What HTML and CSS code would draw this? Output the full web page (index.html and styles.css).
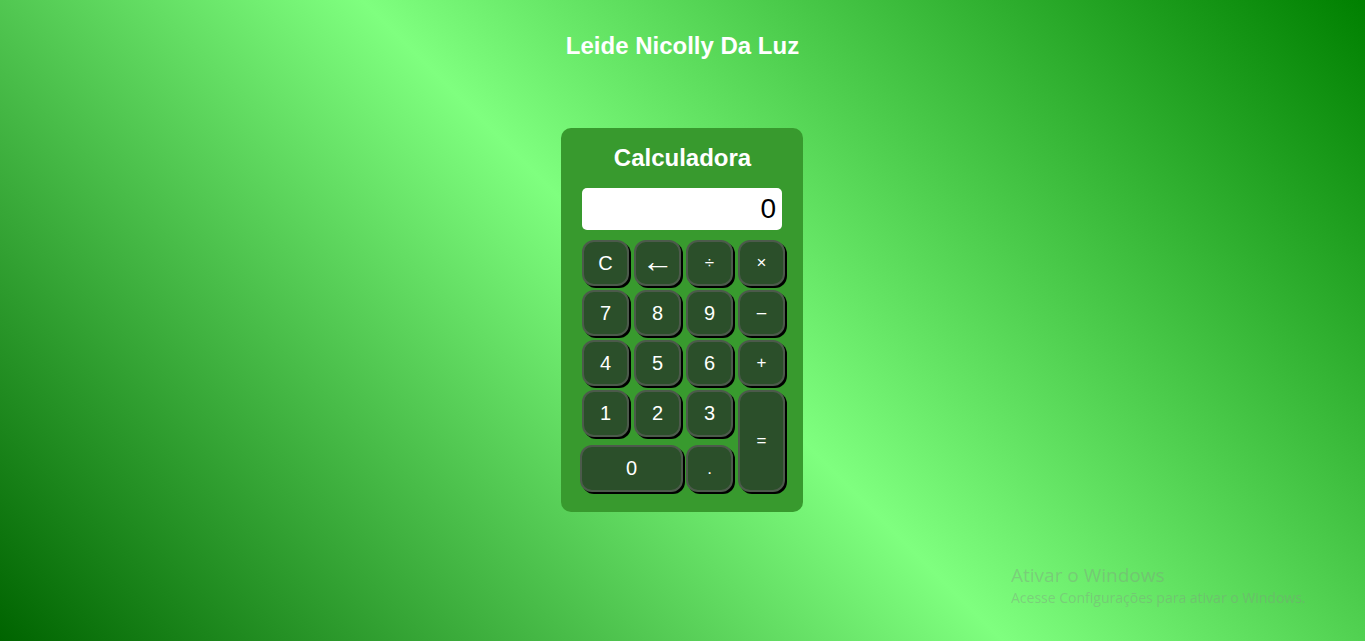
FILE: index.html
```html
<!DOCTYPE html>
<html lang="pt-BR">
<head>
<meta charset="UTF-8">
<title>Calculadora</title>
<link rel="stylesheet" href="styles.css">
</head>
<body>
  <h2 class="author">Leide Nicolly Da Luz</h2>
  <div class="calc">
    <h2 class="calc-title">Calculadora</h2>
    <div class="display">0</div>
    <div class="keys">
      <button class="key">C</button>
      <button class="key key-arrow">&larr;</button>
      <button class="key key-sm">&divide;</button>
      <button class="key key-sm">&times;</button>
      <button class="key">7</button>
      <button class="key">8</button>
      <button class="key">9</button>
      <button class="key key-sm">&ndash;</button>
      <button class="key">4</button>
      <button class="key">5</button>
      <button class="key">6</button>
      <button class="key key-sm">+</button>
      <button class="key key-r4">1</button>
      <button class="key key-r4">2</button>
      <button class="key key-r4">3</button>
      <button class="key key-eq key-sm">=</button>
      <button class="key key-zero">0</button>
      <button class="key key-dot key-sm">.</button>
    </div>
  </div>
  <div class="watermark">
    <div class="wm-title">Ativar o Windows</div>
    <div class="wm-sub">Acesse Configurações para ativar o Windows.</div>
  </div>
</body>
</html>
```
FILE: styles.css
```css
html, body {
  margin: 0;
  padding: 0;
  height: 100%;
}
body {
  font-family: "Liberation Sans", Arial, sans-serif;
  background: linear-gradient(45deg, #006400 0%, #7fff7f 50%, #008000 100%);
  display: flex;
  flex-direction: column;
  align-items: center;
  overflow: hidden;
}
.author {
  margin: 32px 0 0 0;
  font-size: 24px;
  line-height: 28px;
  color: #ffffff;
  font-weight: bold;
}
.calc {
  margin-top: 68px;
  margin-right: 1px;
  width: 242px;
  height: 384px;
  box-sizing: border-box;
  padding: 16px 20px 0 21px;
  background: #389a2e;
  border-radius: 10px;
  display: flex;
  flex-direction: column;
}
.calc-title {
  margin: 0;
  font-size: 24px;
  line-height: 28px;
  text-align: center;
  color: #ffffff;
}
.display {
  margin-top: 16px;
  width: 200px;
  height: 42px;
  box-sizing: border-box;
  background: #ffffff;
  border-radius: 5px;
  text-align: right;
  padding-right: 6px;
  font-size: 28px;
  line-height: 42px;
  color: #000000;
}
.keys {
  margin-top: 10px;
  display: grid;
  grid-template-columns: 47px 47px 47px 47px;
  grid-template-rows: 46px 46px 46px 51px 47px;
  column-gap: 5px;
  row-gap: 4px;
}
.key {
  box-sizing: border-box;
  margin: 0;
  padding: 0;
  width: 100%;
  height: 100%;
  background: #2b4f2a;
  border: 2px solid #4c5a4b;
  border-radius: 12px;
  box-shadow: 2px 2px 0 #000000;
  color: #ffffff;
  font-family: "Liberation Sans", Arial, sans-serif;
  font-size: 20px;
}
.key-sm {
  font-size: 17px;
}
.key-arrow {
  font-size: 32px;
  line-height: 1;
  padding-bottom: 5px;
}
.key-r4 {
  height: 47px;
  align-self: start;
}
.key-eq {
  grid-column: 4;
  grid-row: 4 / span 2;
}
.key-zero {
  grid-column: 1 / span 2;
  grid-row: 5;
  margin-left: -2px;
  width: calc(100% + 4px);
}
.key-dot {
  grid-column: 3;
  grid-row: 5;
}
.watermark {
  position: fixed;
  left: 1011px;
  top: 562px;
  color: rgba(130, 150, 130, 0.4);
  font-family: "Open Sans", "Noto Sans", sans-serif;
}
.wm-title {
  font-size: 19px;
  line-height: 26px;
}
.wm-sub {
  font-size: 14px;
  line-height: 20px;
}
```
